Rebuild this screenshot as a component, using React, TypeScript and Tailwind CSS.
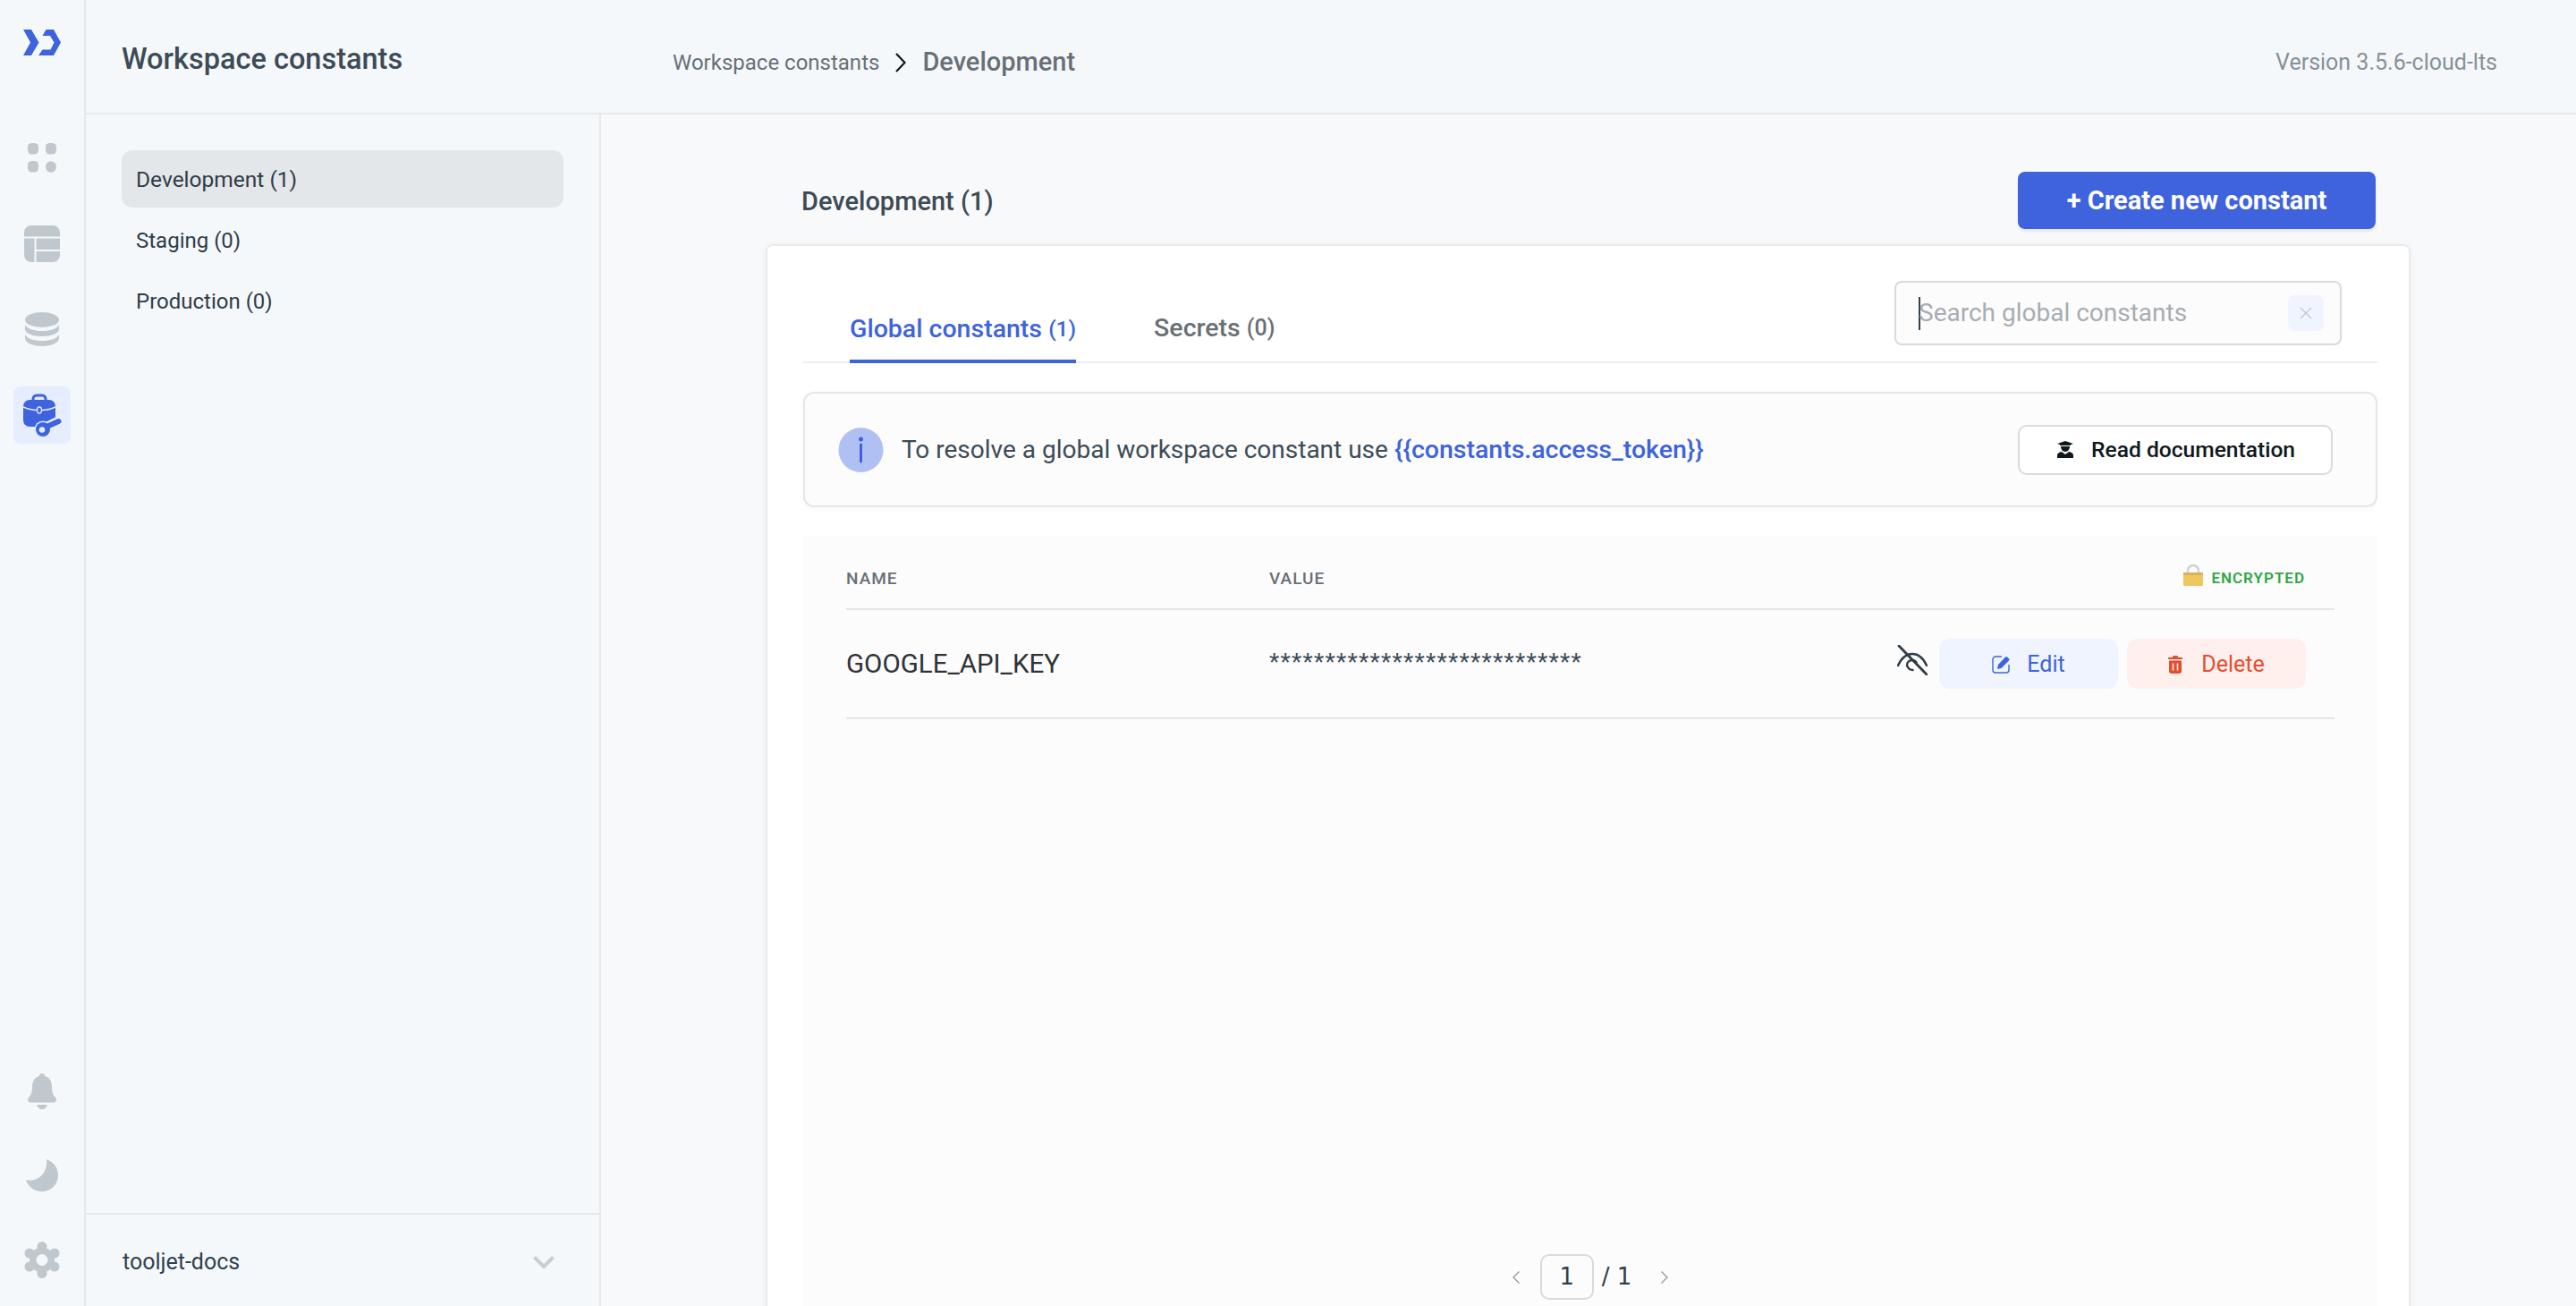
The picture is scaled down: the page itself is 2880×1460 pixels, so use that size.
import React from 'react';

const Logo = () => (
  <svg width="42" height="29" viewBox="0 0 42 29" fill="#3e63dd">
    <path d="M0 0h9l8.500 14.500L9 29H0l8-14.500z" />
    <path d="M25.500 0h8.500L42 14.500 34 29H17l4.500-6.500h9L34.500 14.500 30 7h-8.500z" />
  </svg>
);

const DotsIcon = () => (
  <svg width="32" height="33" viewBox="0 0 32 33" fill="#c1c8cd">
    <rect width="12" height="12.500" rx="4.500" />
    <rect x="20" width="12" height="12.500" rx="4.500" />
    <rect y="20" width="12" height="12.500" rx="4.500" />
    <ellipse cx="26" cy="26.500" rx="6" ry="6.200" />
  </svg>
);

const TableIcon = () => (
  <svg width="40" height="41" viewBox="0 0 40 41">
    <rect width="40" height="41" rx="8" fill="#c1c8cd" />
    <path d="M0 13.500h40M12.500 13.500V41M12.500 28h27.500" stroke="#f5f8fb" strokeWidth="2" />
  </svg>
);

const DatabaseIcon = () => (
  <svg width="38" height="38" viewBox="0 0 38 38" fill="#c1c8cd">
    <ellipse cx="19" cy="8.500" rx="19" ry="8.500" />
    <path d="M0 14v5c0 4.500 8.500 8 19 8s19-3.500 19-8v-5c-3 5-10 7-19 7S3 19 0 14z" />
    <path d="M0 25v4c0 5 8.500 9 19 9s19-4 19-9v-4c-3 5-10 7-19 7S3 30 0 25z" />
  </svg>
);

const BriefcaseKeyIcon = () => (
  <svg width="43" height="48" viewBox="0 0 43 48">
    <path d="M11 9V6a4 4 0 0 1 4-4h6a4 4 0 0 1 4 4v3" fill="none" stroke="#3e63dd" strokeWidth="3" />
    <rect y="7" width="36" height="30" rx="7" fill="#3e63dd" />
    <path d="M0 15c6 3 11 3.500 16 3.500M20 18.500c6 0 11-1 16-3.500" fill="none" stroke="#e6edfe" strokeWidth="1.500" />
    <ellipse cx="18" cy="18.500" rx="2.500" ry="3.500" fill="#3e63dd" stroke="#e6edfe" strokeWidth="1.300" />
    <path d="M24 38 40 30" fill="none" stroke="#e6edfe" strokeWidth="10" />
    <circle cx="22" cy="40" r="9.500" fill="#e6edfe" />
    <path d="M24 38 39.500 31" fill="none" stroke="#3e63dd" strokeWidth="6" strokeLinecap="round" />
    <circle cx="22" cy="40" r="8" fill="#3e63dd" />
    <circle cx="21" cy="40.500" r="3.200" fill="#e6edfe" />
  </svg>
);

const BellIcon = () => (
  <svg width="32" height="40" viewBox="0 0 32 40" fill="#c1c8cd">
    <path d="M16 0c1.800 0 3 1.300 3.200 3C24.500 4.500 27 9 27 15c0 5 1 9 3.500 11.500 1 1 1.500 2 1.500 3 0 2-1.500 3-3.500 3h-25C1.500 32.500 0 31.500 0 29.500c0-1 .5-2 1.500-3C4 24 5 20 5 15 5 9 7.500 4.500 12.800 3 13 1.300 14.200 0 16 0z" />
    <path d="M10 35h12c-1 3-3.200 5-6 5s-5-2-6-5z" />
  </svg>
);

const MoonIcon = () => (
  <svg width="36" height="36" viewBox="0 0 36 36" fill="#c1c8cd">
    <path d="M23 0c8 3 13 9.500 13 18 0 10-8 18-18 18C9 36 2 30 0 23c3 .8 6 .8 9 0 9-2 15.500-12 14-23z" />
  </svg>
);

const GearIcon = () => (
  <svg width="40" height="41" viewBox="0 0 40 41" fill="#c1c8cd">
    <circle cx="20" cy="20.500" r="14" />
    <circle cx="20" cy="5.500" r="5.500" />
    <circle cx="20" cy="35.500" r="5.500" />
    <circle cx="6" cy="13" r="5.500" />
    <circle cx="34" cy="13" r="5.500" />
    <circle cx="6" cy="28" r="5.500" />
    <circle cx="34" cy="28" r="5.500" />
    <circle cx="20" cy="20.500" r="6.500" fill="#f5f8fb" />
  </svg>
);

const ChevronDown = () => (
  <svg width="24" height="14" viewBox="0 0 24 14" fill="none" stroke="#cccccc" strokeWidth="4">
    <path d="M1.500 1.500 12 12 22.500 1.500" />
  </svg>
);

const Crumb = () => (
  <svg width="12" height="22" viewBox="0 0 12 22" fill="none" stroke="#11181c" strokeWidth="2.200">
    <path d="M1 1l9.500 10L1 21" />
  </svg>
);

const InfoDot = () => (
  <svg width="51" height="50" viewBox="0 0 51 50">
    <circle cx="25.500" cy="25" r="25" fill="#b1c0f3" />
    <circle cx="25.500" cy="13" r="2.500" fill="#3e63dd" />
    <path d="M25.500 19v19" stroke="#3e63dd" strokeWidth="3" strokeLinecap="round" />
  </svg>
);

const GradIcon = () => (
  <svg width="18" height="19" viewBox="0 0 18 19" fill="#11181c">
    <path d="M9 0l9 3-3 1v1H3V4L0 3z" />
    <path d="M4 6h10c0 3-2 6-5 6S4 9 4 6z" />
    <path d="M0 19v-3c0-2 2-3.500 5-4l4 3 4-3c3 .5 5 2 5 4v3z" />
  </svg>
);

const LockIcon = () => (
  <svg width="22" height="24" viewBox="0 0 22 24">
    <path d="M5 10V7a6 6 0 0 1 12 0v3" fill="none" stroke="#cfd2d4" strokeWidth="2.500" />
    <rect y="9" width="22" height="15" rx="1.500" fill="#eec662" />
    <rect y="9" width="22" height="3" fill="#d9b158" />
  </svg>
);

const EyeOffIcon = () => (
  <svg width="34" height="34" viewBox="0 0 34 34" fill="none" stroke="#2f3c47" strokeWidth="2.400" strokeLinecap="round">
    <path d="M1 23C5 14 11 10 17 10s12 4 16 13" />
    <path d="M11 23c0-3.500 2.500-6 6-6 2 0 3.500 1 4.500 2.500" />
    <path d="M11.500 24c1.500 3 4 4 6 4" />
    <path d="M2 1l31 32" strokeWidth="2.800" />
  </svg>
);

const EditIcon = () => (
  <svg width="21" height="20" viewBox="0 0 21 20">
    <path d="M11 1H4a3 3 0 0 0-3 3v12a3 3 0 0 0 3 3h12a3 3 0 0 0 3-3v-6" fill="none" stroke="#3e63dd" strokeWidth="1.400" />
    <path d="M6 15l1-5 7.500-8 1.500-1c1 0 3.500 2.500 3.500 3.500l-1 1.500-8 8z" fill="#3e63dd" />
  </svg>
);

const TrashIcon = () => (
  <svg width="16" height="20" viewBox="0 0 16 20" fill="#e54d2e">
    <path d="M5.500 0h5l.8 2H16v2H0V2h4.700z" />
    <path d="M1 5.500h14V17a3 3 0 0 1-3 3H4a3 3 0 0 1-3-3z" />
    <path d="M5.500 8.500v8M10.500 8.500v8" stroke="#fff0ee" strokeWidth="1.600" />
  </svg>
);

const PagerChevron = ({ flip }: { flip?: boolean }) => (
  <svg width="8" height="14" viewBox="0 0 8 14" fill="none" stroke="#8f979c" strokeWidth="1.300" className={flip ? 'rotate-180' : ''}>
    <path d="M7.500.5 1 7l6.500 6.500" />
  </svg>
);

const RailButton = ({ children, active }: { children: React.ReactNode; active?: boolean }) => (
  <div className={`flex h-[64px] w-[64px] items-center justify-center rounded-[8px] ${active ? 'bg-[#e6edfe]' : ''}`}>
    {children}
  </div>
);

const App: React.FC = () => {
  return (
    <div className="flex h-[1460px] w-[2880px] overflow-hidden bg-[#f5f8fb] font-['Roboto',sans-serif] text-[#30404d]">
      {/* Left rail */}
      <div className="flex w-[96px] shrink-0 flex-col items-center border-r-2 border-[#e6e8eb] pb-[20px] pt-[33px]">
        <Logo />
        <div className="mt-[82px] flex flex-col gap-[32px]">
          <RailButton><DotsIcon /></RailButton>
          <RailButton><TableIcon /></RailButton>
          <RailButton><DatabaseIcon /></RailButton>
          <RailButton active><BriefcaseKeyIcon /></RailButton>
        </div>
        <div className="mt-auto flex flex-col gap-[30px]">
          <RailButton><BellIcon /></RailButton>
          <RailButton><MoonIcon /></RailButton>
          <RailButton><GearIcon /></RailButton>
        </div>
      </div>

      <div className="flex min-w-0 flex-1 flex-col">
        {/* Header */}
        <div className="flex h-[128px] shrink-0 items-center border-b-2 border-[#e6e8eb] pl-[40px] pr-[88px]">
          <div className="mt-[7px] w-[616px] text-[32.500px] font-medium text-[#3c4b56]">Workspace constants</div>
          <div className="mt-[14px] flex items-center">
            <span className="text-[24px] text-[#687076]">Workspace constants</span>
            <span className="mx-[18px] flex"><Crumb /></span>
            <span className="text-[29px] font-medium text-[#687076]">Development</span>
          </div>
          <div className="ml-auto mt-[14px] text-[25px] text-[#889096]">Version 3.5.6-cloud-lts</div>
        </div>

        <div className="flex min-h-0 flex-1">
          {/* Environment list */}
          <div className="flex w-[576px] shrink-0 flex-col border-r-2 border-[#e6e8eb]">
            <div className="flex flex-1 flex-col gap-[4.500px] px-[40px] pt-[40px]">
              <div className="flex h-[64px] items-center rounded-[12px] bg-[#e4e7ea] pl-[16px] pt-[2px] text-[24.500px] text-[#2f3c47]">Development (1)</div>
              <div className="flex h-[64px] items-center pl-[16px] text-[24px] text-[#2f3c47]">Staging (0)</div>
              <div className="flex h-[64px] items-center pl-[16px] text-[24px] text-[#2f3c47]">Production (0)</div>
            </div>
            <div className="flex h-[104px] shrink-0 items-center justify-between border-t-2 border-[#e6e8eb] pl-[41px] pr-[50px] pt-[3px]">
              <span className="text-[25px] text-[#30404d]">tooljet-docs</span>
              <ChevronDown />
            </div>
          </div>

          {/* Main */}
          <div className="min-w-0 flex-1 overflow-hidden bg-[#f8f9fb] pl-[184px] pr-[185px] pt-[64px]">
            <div className="flex items-center justify-between pl-[40px] pr-[39px]">
              <div className="pt-[4px] text-[29px] font-medium text-[#3c4b56]">Development (1)</div>
              <button className="h-[64px] w-[400px] rounded-[8px] bg-[#3e63dd] pt-[2px] text-[29px] font-bold text-white shadow-[0_3px_3px_rgba(16,24,40,0.08)]">
                + Create new constant
              </button>
            </div>

            <div className="mt-[17px] h-[1300px] rounded-[8px] border-2 border-[#e9ebee] bg-white pl-[40px] pr-[35px] shadow-[0_2px_10px_rgba(16,24,40,0.06)]">
              {/* Tabs */}
              <div className="flex h-[131px] justify-between border-b-2 border-[#eceef0]">
                <div className="flex items-end gap-[87px] pl-[52px]">
                  <div className="-mb-[2px] flex h-[80px] items-center border-b-4 border-[#3e63dd] pt-[8px] text-[28.500px] font-medium text-[#3e63dd]">
                    Global constants&nbsp;<span className="text-[24.500px]">(1)</span>
                  </div>
                  <div className="flex h-[80px] items-center pt-[6px] text-[28.500px] font-medium text-[#687076]">
                    Secrets&nbsp;<span className="text-[25px]">(0)</span>
                  </div>
                </div>
                <div className="mr-[40px] mt-[39px] flex h-[72px] w-[500px] items-center rounded-[8px] border-2 border-[#d7dbdf] bg-[#fcfcfc] pl-[25px] pr-[18px] text-[28px] text-[#a6adb3]">
                  <span className="-mr-[2px] h-[37px] w-[2px] bg-[#30404d]" />
                  <span>Search global constants</span>
                  <span className="ml-auto flex h-[40px] w-[40px] items-center justify-center rounded-[8px] bg-[#f0f4ff]">
                    <svg width="14" height="14" viewBox="0 0 14 14" fill="none" stroke="#c1c8cd" strokeWidth="1.400">
                      <path d="M1 1l12 12M13 1L1 13" />
                    </svg>
                  </span>
                </div>
              </div>

              {/* Info box */}
              <div className="mt-[32px] flex h-[129px] items-center rounded-[12px] border-2 border-[#e4e6ea] bg-[#fcfcfc] pl-[37px] pr-[48px] shadow-[0_2px_6px_rgba(16,24,40,0.04)]">
                <InfoDot />
                <div className="ml-[20px] pt-[2px] text-[28px] text-[#3c4b56]">
                  To resolve a global workspace constant use{' '}
                  <span className="text-[28.500px] font-medium text-[#3e63dd]">{'{{constants.access_token}}'}</span>
                </div>
                <button className="ml-auto flex h-[56px] w-[352px] items-center rounded-[10px] border-2 border-[#d7dbdf] bg-white pl-[42px] text-[24.600px] font-medium text-[#11181c]">
                  <GradIcon />
                  <span className="ml-[20px] pt-[1px]">Read documentation</span>
                </button>
              </div>

              {/* Table */}
              <div className="mt-[32px] h-[900px] bg-[#fcfcfc] pl-[48px] pr-[48px]">
                <div className="flex h-[83px] items-center border-b-2 border-[#e4e4e9] pt-[16px]">
                  <div className="w-[473px] text-[19px] font-medium tracking-[1px] text-[#687076]">NAME</div>
                  <div className="text-[19px] font-medium tracking-[1px] text-[#687076]">VALUE</div>
                  <div className="-mt-[10px] ml-auto mr-[33px] flex items-end gap-[9px]">
                    <LockIcon />
                    <span className="text-[17px] font-semibold leading-none tracking-[1px] text-[#30a846]">ENCRYPTED</span>
                  </div>
                </div>
                <div className="flex h-[122px] items-center border-b-2 border-[#e4e4e9]">
                  <div className="w-[473px] text-[29.500px] text-[#2e3338]">GOOGLE_API_KEY</div>
                  <div className="-mt-[4px] text-[26px] tracking-[1.300px] text-[#3c4b56]">****************************</div>
                  <div className="ml-auto mr-[32px] flex items-center">
                    <span className="-mt-[8px] flex"><EyeOffIcon /></span>
                    <button className="ml-[13px] flex h-[56px] w-[200px] items-center justify-center gap-[18px] rounded-[12px] bg-[#f0f4ff] pt-[2px] text-[25px] text-[#3e63dd]">
                      <EditIcon />
                      Edit
                    </button>
                    <button className="ml-[10px] flex h-[56px] w-[200px] items-center justify-center gap-[21px] rounded-[12px] bg-[#fff0ee] pt-[2px] text-[25px] text-[#e54d2e]">
                      <TrashIcon />
                      Delete
                    </button>
                  </div>
                </div>
                {/* Pagination */}
                <div className="mt-[598px] flex items-center justify-center font-['DejaVu_Sans',sans-serif] text-[26px] text-[#30404d]">
                  <PagerChevron />
                  <span className="ml-[23px] flex h-[51px] w-[60px] items-center justify-center rounded-[10px] border-2 border-[#d7dbdf]">1</span>
                  <span className="ml-[9px]">/ 1</span>
                  <span className="ml-[33px] flex"><PagerChevron flip /></span>
                </div>
              </div>
            </div>
          </div>
        </div>
      </div>
    </div>
  );
};

export default App;
